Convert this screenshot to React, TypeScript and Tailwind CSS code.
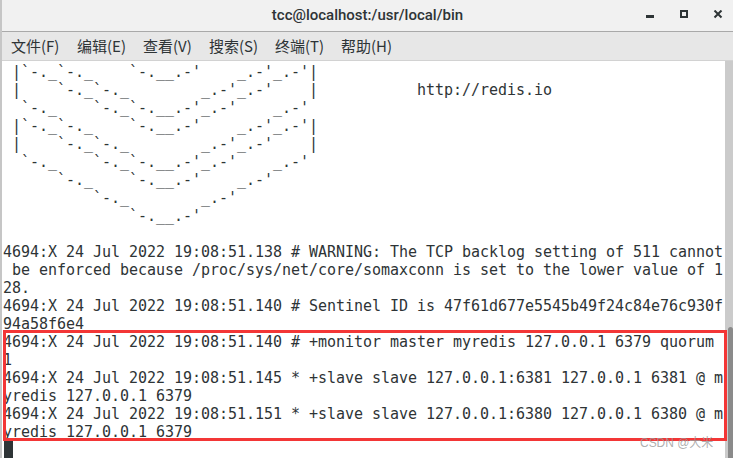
import React from "react";

const menus = ["文件(F)", "编辑(E)", "查看(V)", "搜索(S)", "终端(T)", "帮助(H)"];

const lines = [
  " |`-._`-._    `-.__.-'    _.-'_.-'|",
  " |    `-._`-._        _.-'_.-'    |           http://redis.io",
  "  `-._    `-._`-.__.-'_.-'    _.-'",
  " |`-._`-._    `-.__.-'    _.-'_.-'|",
  " |    `-._`-._        _.-'_.-'    |",
  "  `-._    `-._`-.__.-'_.-'    _.-'",
  "      `-._    `-.__.-'    _.-'",
  "          `-._        _.-'",
  "              `-.__.-'",
  "",
  "4694:X 24 Jul 2022 19:08:51.138 # WARNING: The TCP backlog setting of 511 cannot",
  " be enforced because /proc/sys/net/core/somaxconn is set to the lower value of 1",
  "28.",
  "4694:X 24 Jul 2022 19:08:51.140 # Sentinel ID is 47f61d677e5545b49f24c84e76c930f",
  "94a58f6e4",
  "4694:X 24 Jul 2022 19:08:51.140 # +monitor master myredis 127.0.0.1 6379 quorum",
  "1",
  "4694:X 24 Jul 2022 19:08:51.145 * +slave slave 127.0.0.1:6381 127.0.0.1 6381 @ m",
  "yredis 127.0.0.1 6379",
  "4694:X 24 Jul 2022 19:08:51.151 * +slave slave 127.0.0.1:6380 127.0.0.1 6380 @ m",
  "yredis 127.0.0.1 6379",
];

export default function App() {
  return (
    <div className="w-[733px] h-[458px] overflow-hidden flex flex-col bg-white border-l-2 border-[#c6c6c6]">
      {/* title bar */}
      <div className="h-[32px] shrink-0 grid grid-cols-[1fr_auto_1fr] items-center bg-[#f1f1f1] border-b border-[#a9a9a9]">
        <div />
        <div className="font-['Roboto',sans-serif] text-[15px] font-medium text-[#2e3436]">
          tcc@localhost:/usr/local/bin
        </div>
        <div className="flex justify-end items-center gap-[24px] pr-[10px] -mt-[1px]">
          <svg width="10" height="10" viewBox="0 0 10 10">
            <rect x="1" y="5" width="8" height="3" fill="#2e3436" />
          </svg>
          <svg width="10" height="10" viewBox="0 0 10 10">
            <rect x="2" y="1" width="6" height="6" fill="none" stroke="#2e3436" strokeWidth="2" />
          </svg>
          <svg width="10" height="10" viewBox="0 0 10 10">
            <path d="M1.5 0.5 L8.5 7.5 M8.5 0.5 L1.5 7.5" stroke="#2e3436" strokeWidth="2" />
          </svg>
        </div>
      </div>

      {/* menu bar */}
      <div className="h-[29px] shrink-0 flex items-center pl-[9px] bg-[#e7e7e7] border-b border-[#d2d2d2] font-['Noto_Sans_CJK_SC',sans-serif] text-[15px] text-[#2e3436]">
        {menus.map((m) => (
          <div key={m} className="w-[66px]">
            {m}
          </div>
        ))}
      </div>

      {/* terminal */}
      <div className="flex-1 min-h-0 flex overflow-hidden">
        <div className="relative flex-1 pt-[2px] pl-[1px] font-['DejaVu_Sans_Mono',monospace] text-[15px] leading-[18px] tracking-[-0.03px] text-[#2e3436]">
          {lines.map((l, i) => (
            <div key={i} className="h-[18px] whitespace-pre">
              {l}
            </div>
          ))}
          <div className="h-[18px] w-[9px] ml-[1px] bg-[#2e3436]" />

          {/* highlight box */}
          <div className="absolute left-[1px] top-[269px] w-[724px] h-[111px] border-[3px] border-[#f33636]" />

          {/* watermark */}
          <div className="absolute left-[638px] top-[375px] text-[12px] leading-[14px] text-[#9a9a9a]/80 font-['Liberation_Sans','Noto_Sans_CJK_SC',sans-serif] whitespace-nowrap">
            CSDN @大米
          </div>
        </div>

        {/* scrollbar */}
        <div className="w-[8px] shrink-0 flex flex-col bg-[#cbcbcb]">
          <div className="mt-auto ml-auto h-[131px] w-[5px] rounded-t-[3px] bg-[#8a8a8a]" />
        </div>
      </div>
    </div>
  );
}
